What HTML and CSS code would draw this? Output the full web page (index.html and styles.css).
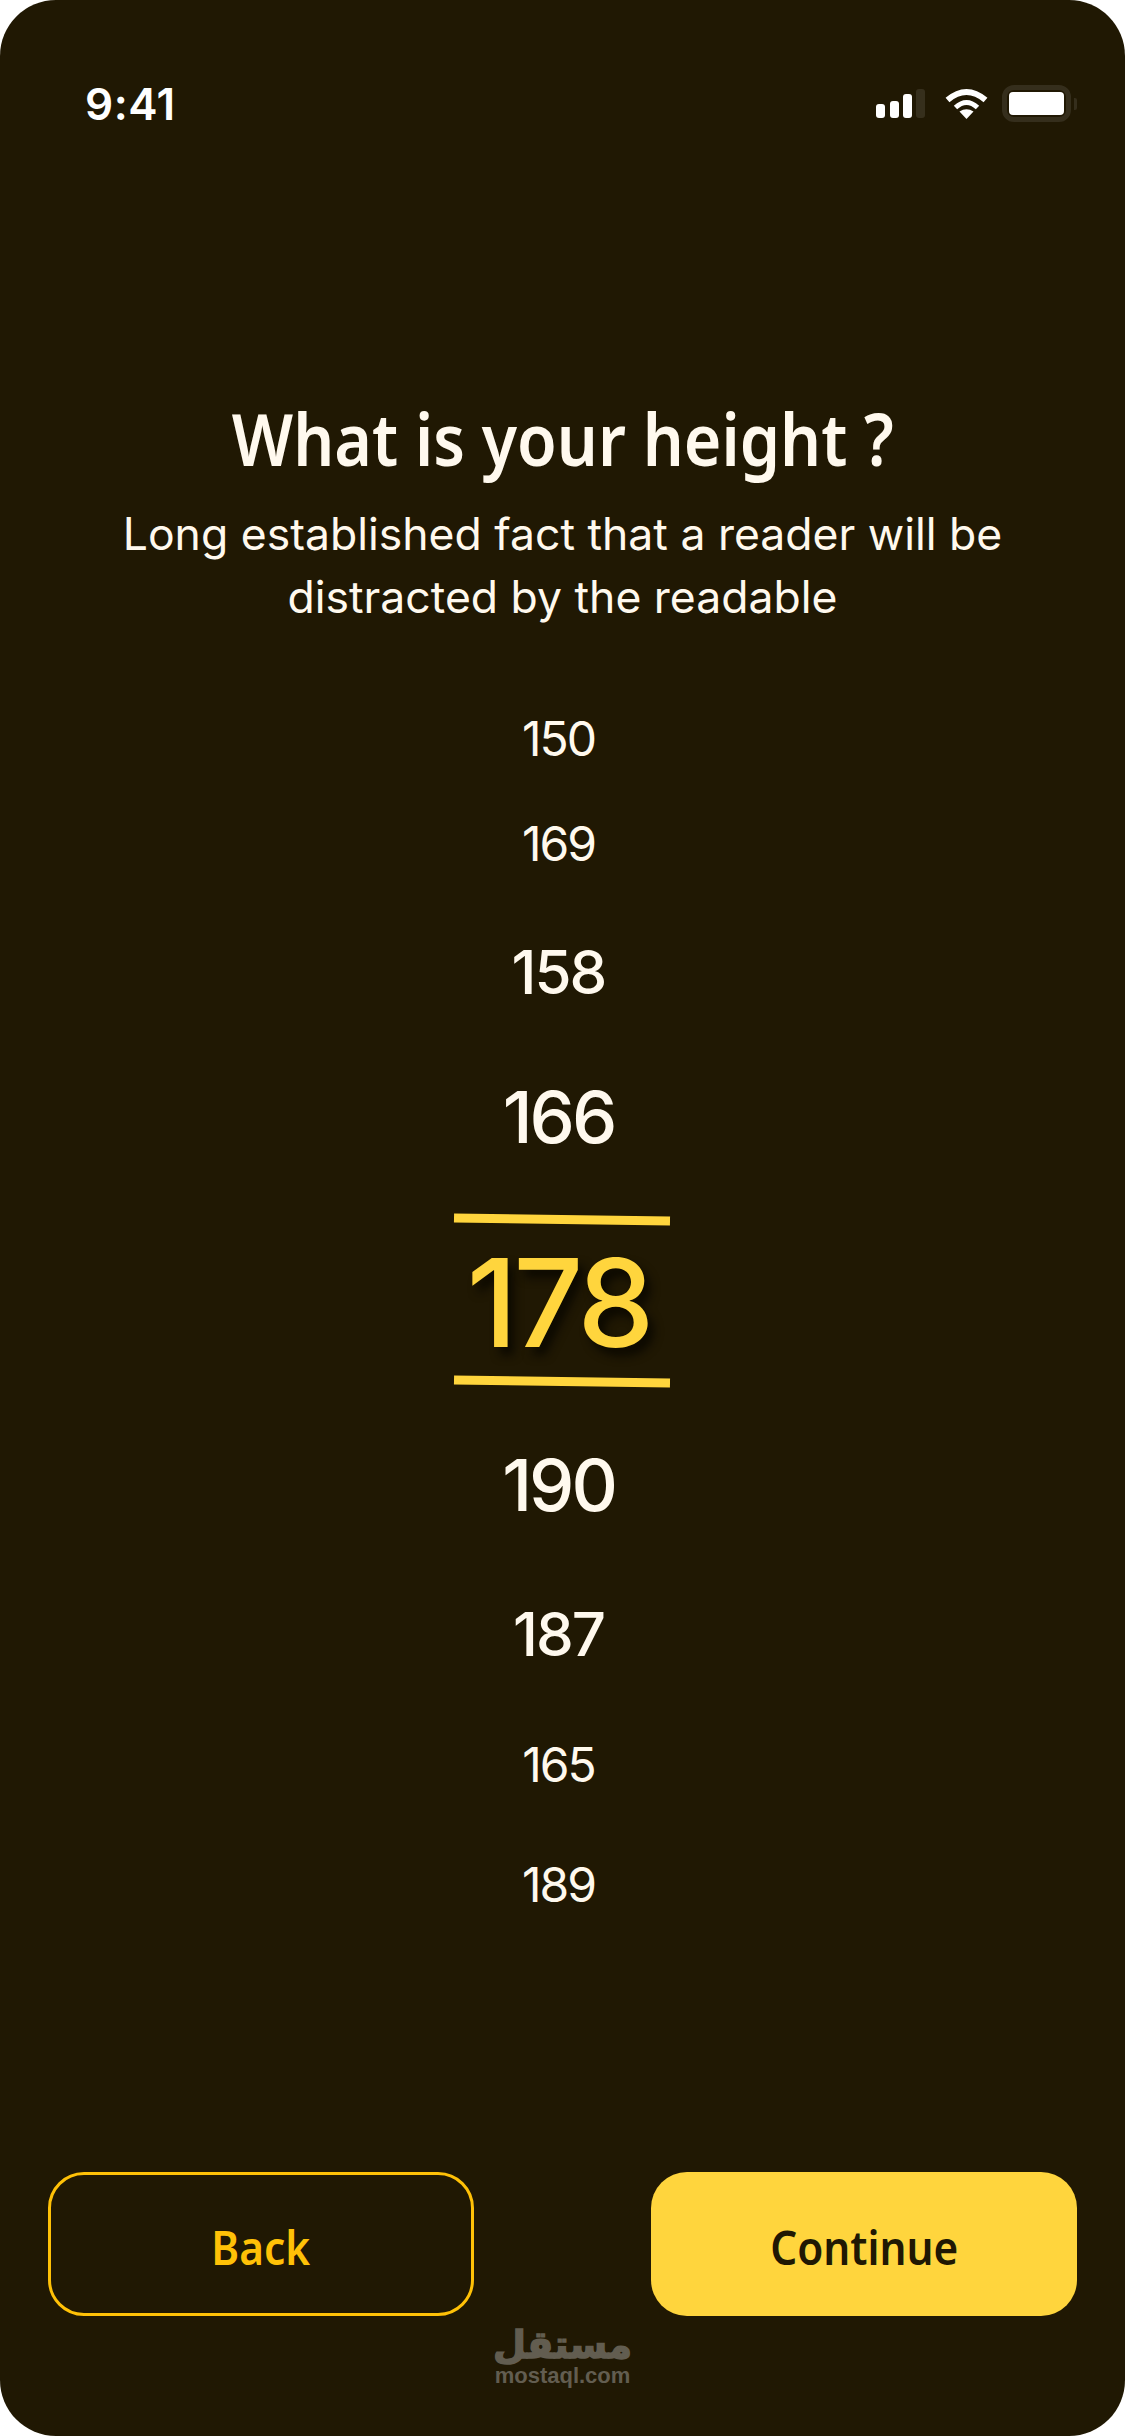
FILE: index.html
```html
<!DOCTYPE html>
<html lang="en">

<head>
    <meta charset="UTF-8">
    <meta name="viewport" content="width=device-width, initial-scale=1.0">
    <title>Height</title>
    <link rel="stylesheet" href="styles.css">
</head>

<body>
    <div class="screen">
        <div class="status-bar">
            <span class="time">9:41</span>
            <div class="status-icons">
                <svg class="signal" width="49" height="29" viewBox="0 0 49 29">
                    <rect x="0" y="15" width="9" height="14" rx="3" fill="#fff" />
                    <rect x="14" y="12" width="9" height="17" rx="3" fill="#fff" />
                    <rect x="27" y="5" width="9" height="24" rx="3" fill="#fff" />
                    <rect x="40" y="0" width="9" height="29" rx="3" fill="#fff" fill-opacity="0.1" />
                </svg>
                <svg class="wifi" width="43" height="31" viewBox="0 0 43 31">
                    <path d="M2.5 12 Q21.5 -4 40.5 12" fill="none" stroke="#fff" stroke-width="6" />
                    <path d="M10.5 19.5 Q21.5 9.5 32.5 19.5" fill="none" stroke="#fff" stroke-width="5" />
                    <path d="M14.5 23.5 Q21.5 19 28.5 23.5 L21.5 31 Z" fill="#fff" />
                </svg>
                <div class="battery">
                    <div class="battery-fill"></div>
                </div>
                <div class="battery-cap"></div>
            </div>
        </div>

        <div class="intro">
            <h1><span>What is your height ?</span></h1>
            <p>Long established fact that a reader will be<br>distracted by the readable</p>
        </div>

        <div class="picker">
            <div class="value small">150</div>
            <div class="value small">169</div>
            <div class="value medium">158</div>
            <div class="value large">166</div>
            <div class="value selected">178</div>
            <div class="value large">190</div>
            <div class="value medium">187</div>
            <div class="value small">165</div>
            <div class="value small">189</div>
        </div>

        <div class="actions">
            <div class="btn btn-back"><span>Back</span></div>
            <div class="btn btn-continue"><span>Continue</span></div>
        </div>

        <div class="watermark">
            <div class="watermark-ar" lang="ar" dir="rtl">مستقل</div>
            <div class="watermark-en">mostaql.com</div>
        </div>
    </div>
</body>

</html>
```
FILE: styles.css
```css
body {
    margin: 0;
    background-color: #fff;
    font-family: Inter, sans-serif;
}

.screen {
    width: 1125px;
    height: 2436px;
    background-color: #201803;
    border-radius: 56px;
    display: flex;
    flex-direction: column;
    overflow: hidden;
    color: #fff9ee;
}

.status-bar {
    display: flex;
    justify-content: space-between;
    align-items: center;
    height: 37px;
    margin-top: 85px;
    padding: 0 48px 0 85px;
}

.time {
    font-size: 44px;
    font-weight: 600;
    letter-spacing: 0.5px;
    color: #fff;
}

.status-icons {
    display: flex;
    align-items: center;
}

.wifi {
    margin-left: 20px;
    margin-right: 14px;
}

.battery {
    width: 69px;
    height: 37px;
    box-sizing: border-box;
    border: 5px solid #352e1c;
    border-radius: 12px;
    padding: 2px;
    display: flex;
}

.battery-fill {
    flex: 1;
    background: #fff;
    border-radius: 4px;
}

.battery-cap {
    width: 3px;
    height: 12px;
    margin-left: 3px;
    background: #352e1c;
    border-radius: 0 2px 2px 0;
}

.intro {
    margin-top: 268px;
    text-align: center;
}

.intro h1 {
    margin: 0;
    font-family: "Noto Sans", sans-serif;
    font-size: 72px;
    font-weight: 600;
    line-height: 96px;
}

/* no condensed cut of Noto Sans is installed */
.intro h1 span {
    display: inline-block;
    transform: scaleX(0.895);
}

.intro p {
    margin: 0;
    margin-top: 17px;
    font-size: 44.5px;
    line-height: 63px;
}

.picker {
    display: flex;
    flex-direction: column;
    align-items: center;
    margin-top: 80px;
    padding-right: 8px;
}

.small {
    font-size: 48px;
    line-height: 60px;
    letter-spacing: -2px;
}

.medium {
    font-size: 60px;
    font-weight: 500;
    line-height: 74px;
    letter-spacing: -2px;
}

.large {
    font-size: 72px;
    font-weight: 500;
    line-height: 88px;
    letter-spacing: -3px;
}

.selected {
    width: 216px;
    box-sizing: border-box;
    text-align: center;
    font-size: 122px;
    font-weight: 500;
    line-height: 146px;
    letter-spacing: -4px;
    color: #ffd53d;
    text-shadow: 6px 8px 10px #0c0900;
    padding: 15px 0 10px;
    position: relative;
}

.selected:before,
.selected:after {
    content: "";
    position: absolute;
    left: 3px;
    right: -3px;
    height: 9px;
    background: #ffd53d;
    transform: rotate(0.8deg);
}

.selected:before {
    top: 0;
}

.selected:after {
    bottom: 0;
}

/* the wheel rows are not evenly spaced */
.value:nth-child(2) {
    margin-top: 45px;
}

.value:nth-child(3) {
    margin-top: 61px;
}

.value:nth-child(4) {
    margin-top: 64px;
}

.value:nth-child(5) {
    margin-top: 54px;
}

.value:nth-child(6) {
    margin-top: 55px;
}

.value:nth-child(7) {
    margin-top: 68px;
}

.value:nth-child(8) {
    margin-top: 64px;
}

.value:nth-child(9) {
    margin-top: 60px;
}

.actions {
    display: flex;
    justify-content: space-between;
    margin-top: auto;
    padding: 0 48px;
}

.btn {
    width: 426px;
    height: 144px;
    box-sizing: border-box;
    padding-top: 5px;
    display: flex;
    justify-content: center;
    align-items: center;
    border-radius: 36px;
    font-family: "Noto Sans", sans-serif;
    font-size: 46px;
    font-weight: 600;
}

.btn span {
    transform: scaleX(0.92);
}

.btn-back {
    border: 3px solid #ffc107;
    color: #ffc107;
}

.btn-continue {
    background: #ffd53d;
    color: #201803;
}

.watermark {
    height: 120px;
    box-sizing: border-box;
    padding-top: 9px;
    text-align: center;
    color: #625d50;
}

.watermark-ar {
    font-family: "DejaVu Sans", sans-serif;
    font-size: 38px;
    font-weight: bold;
    line-height: 40px;
    -webkit-text-stroke: 1.5px #625d50;
}

.watermark-en {
    font-family: "Liberation Sans", sans-serif;
    font-size: 22px;
    font-weight: bold;
    line-height: 22px;
}
```
